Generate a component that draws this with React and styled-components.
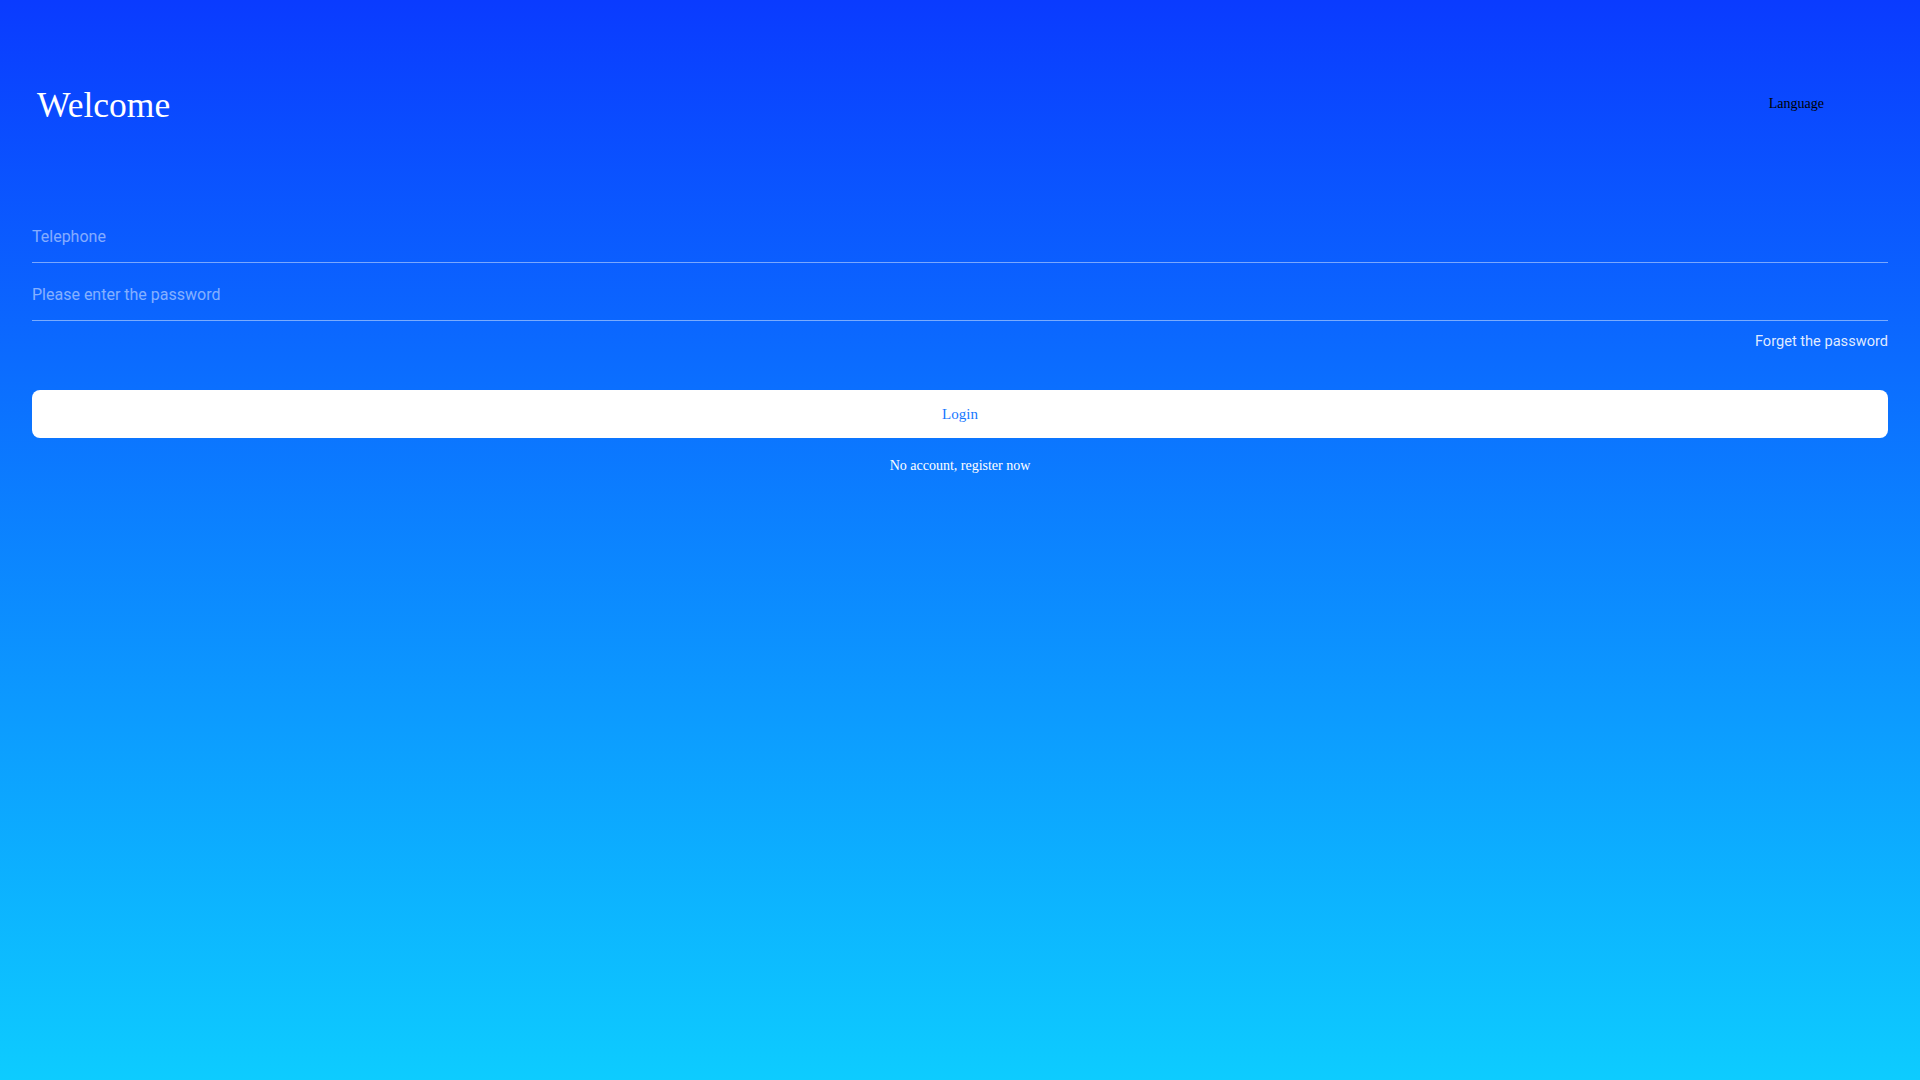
import React from 'react'
import styled, { createGlobalStyle } from 'styled-components'

const GlobalStyle = createGlobalStyle`
  html, body {
    margin: 0;
    padding: 0;
  }
  body {
    font-family: "Liberation Serif", "Times New Roman", serif;
  }
  * {
    box-sizing: border-box;
  }
`

const Page = styled.div`
  min-height: 100vh;
  width: 100%;
  background: linear-gradient(180deg, #0a3bff 0%, #0dccff 100%);
  padding: 78px 32px 0;
`

const Header = styled.div`
  display: flex;
  align-items: center;
  justify-content: space-between;
  height: 50px;
`

const Title = styled.h1`
  margin: 4px 0 0 5px;
  font-size: 35.5px;
  font-weight: 400;
  line-height: 41px;
  color: #fff;
`

const Language = styled.div`
  margin: 2px 64px 0 0;
  font-size: 14px;
  color: #000;
`

const Form = styled.form`
  margin-top: 77px;
  display: flex;
  flex-direction: column;
`

const Field = styled.div`
  padding-top: 7px;
  border-bottom: 1px solid rgba(255, 255, 255, 0.45);
`

const Input = styled.input`
  display: block;
  width: 100%;
  height: 50px;
  padding: 0 0 2px;
  border: none;
  outline: none;
  background: transparent;
  font-family: Roboto, "Liberation Sans", sans-serif;
  font-size: 16px;
  color: #fff;

  &::placeholder {
    color: rgba(255, 255, 255, 0.5);
  }
`

const ForgetRow = styled.div`
  display: flex;
  justify-content: flex-end;
  margin-top: 10px;
`

const ForgetLink = styled.a`
  font-family: Roboto, "Liberation Sans", sans-serif;
  font-size: 14.6px;
  line-height: 20px;
  color: rgba(255, 255, 255, 0.88);
  text-decoration: none;
  cursor: pointer;
`

const LoginButton = styled.button`
  margin-top: 39px;
  height: 48px;
  width: 100%;
  border: none;
  border-radius: 8px;
  background: #fff;
  color: #1677ff;
  font-family: inherit;
  font-size: 15px;
  cursor: pointer;
`

const Register = styled.div`
  margin-top: 18px;
  text-align: center;
  font-size: 14px;
  line-height: 20px;
  color: #fff;
`

const App = () => {
  return (
    <Page>
      <GlobalStyle />
      <Header>
        <Title>Welcome</Title>
        <Language>Language</Language>
      </Header>
      <Form onSubmit={e => e.preventDefault()}>
        <Field>
          <Input type="tel" placeholder="Telephone" />
        </Field>
        <Field>
          <Input type="password" placeholder="Please enter the password" />
        </Field>
        <ForgetRow>
          <ForgetLink>Forget the password</ForgetLink>
        </ForgetRow>
        <LoginButton type="submit">Login</LoginButton>
        <Register>No account, register now</Register>
      </Form>
    </Page>
  )
}

export default App
